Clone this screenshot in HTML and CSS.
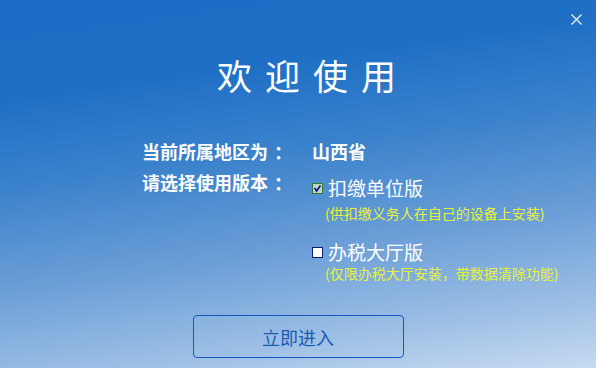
FILE: index.html
```html
<!DOCTYPE html>
<html lang="zh-CN">
<head>
<meta charset="utf-8">
<title>欢迎使用</title>
<link rel="stylesheet" href="styles.css">
</head>
<body>
<div class="panel">
  <button class="close" aria-label="关闭">
    <svg width="11" height="11" viewBox="0 0 11 11"><path d="M0.5 0.5 L10.5 10.5 M10.5 0.5 L0.5 10.5" stroke="#ffffff" stroke-width="1.1" fill="none"/></svg>
  </button>
  <h1 class="title">欢迎使用</h1>
  <div class="form">
    <div class="label">当前所属地区为<span class="colon">：</span></div>
    <div class="value region">山西省</div>
    <div class="label">请选择使用版本<span class="colon">：</span></div>
    <div class="value options">
      <div class="option">
        <div class="opt-main">
          <span class="box checked">
            <svg width="9" height="9" viewBox="0 0 9 9"><path d="M1.5 4 L3.5 7 L7.5 1.5" stroke="#10108a" stroke-width="1.6" fill="none"/></svg>
          </span>
          <span class="opt-name">扣缴单位版</span>
        </div>
        <div class="opt-desc">(供扣缴义务人在自己的设备上安装)</div>
      </div>
      <div class="option option-tight">
        <div class="opt-main">
          <span class="box"></span>
          <span class="opt-name">办税大厅版</span>
        </div>
        <div class="opt-desc">(仅限办税大厅安装，带数据清除功能)</div>
      </div>
    </div>
  </div>
  <div class="actions">
    <button class="enter">立即进入</button>
  </div>
</div>
</body>
</html>
```

FILE: styles.css
```css
html, body {
  margin: 0;
  padding: 0;
  background: #ffffff;
}
body {
  width: 596px;
  height: 382px;
  font-family: "Noto Sans CJK SC", "Microsoft YaHei", "Noto Sans", sans-serif;
}
.panel {
  position: relative;
  width: 596px;
  height: 368px;
  box-sizing: border-box;
  display: flex;
  flex-direction: column;
  background: linear-gradient(172deg, #1b6cc4 0%, #1e6fc5 22%, #3b82cc 42%, #6c9fd7 65%, #9dbfe5 85%, #c6daf1 100%);
}
.close {
  position: absolute;
  top: 14px;
  left: 571px;
  width: 11px;
  height: 11px;
  padding: 0;
  border: 0;
  background: transparent;
  line-height: 0;
}
.title {
  margin: 50px 0 0 0;
  padding-left: 30px;
  height: 50px;
  line-height: 50px;
  text-align: center;
  font-size: 35px;
  font-weight: 400;
  letter-spacing: 13px;
  color: #ffffff;
}
.form {
  margin: 39px 0 0 142px;
  display: grid;
  grid-template-columns: 170px auto;
  row-gap: 6px;
  color: #ffffff;
}
.label, .region {
  font-size: 18px;
  line-height: 25px;
  font-weight: 700;
}
.colon {
  padding-left: 6px;
}
.options {
  display: flex;
  flex-direction: column;
  gap: 18px;
  padding-top: 6px;
}
.opt-main {
  display: flex;
  align-items: center;
  gap: 5px;
  height: 24px;
}
.box {
  width: 11px;
  height: 11px;
  box-sizing: border-box;
  border: 1px solid #0e1f7a;
  background: #ffffff;
  display: flex;
  align-items: center;
  justify-content: center;
}
.box.checked {
  border-color: #2d7a34;
  background: #c4d6c2;
}
.opt-name {
  font-size: 19px;
  line-height: 24px;
  font-weight: 400;
}
.opt-desc {
  margin: 4px 0 0 13px;
  font-size: 14px;
  line-height: 18px;
  color: #e8f23c;
}
.option-tight .opt-desc {
  margin-top: 0;
}
.actions {
  margin-top: 33px;
  display: flex;
  justify-content: center;
}
.enter {
  width: 211px;
  height: 43px;
  box-sizing: border-box;
  border: 1px solid #1658be;
  border-radius: 4px;
  background: transparent;
  font-family: "Noto Sans CJK SC", "Microsoft YaHei", sans-serif;
  font-size: 18px;
  color: #1a5cb8;
  padding: 0;
}
```
